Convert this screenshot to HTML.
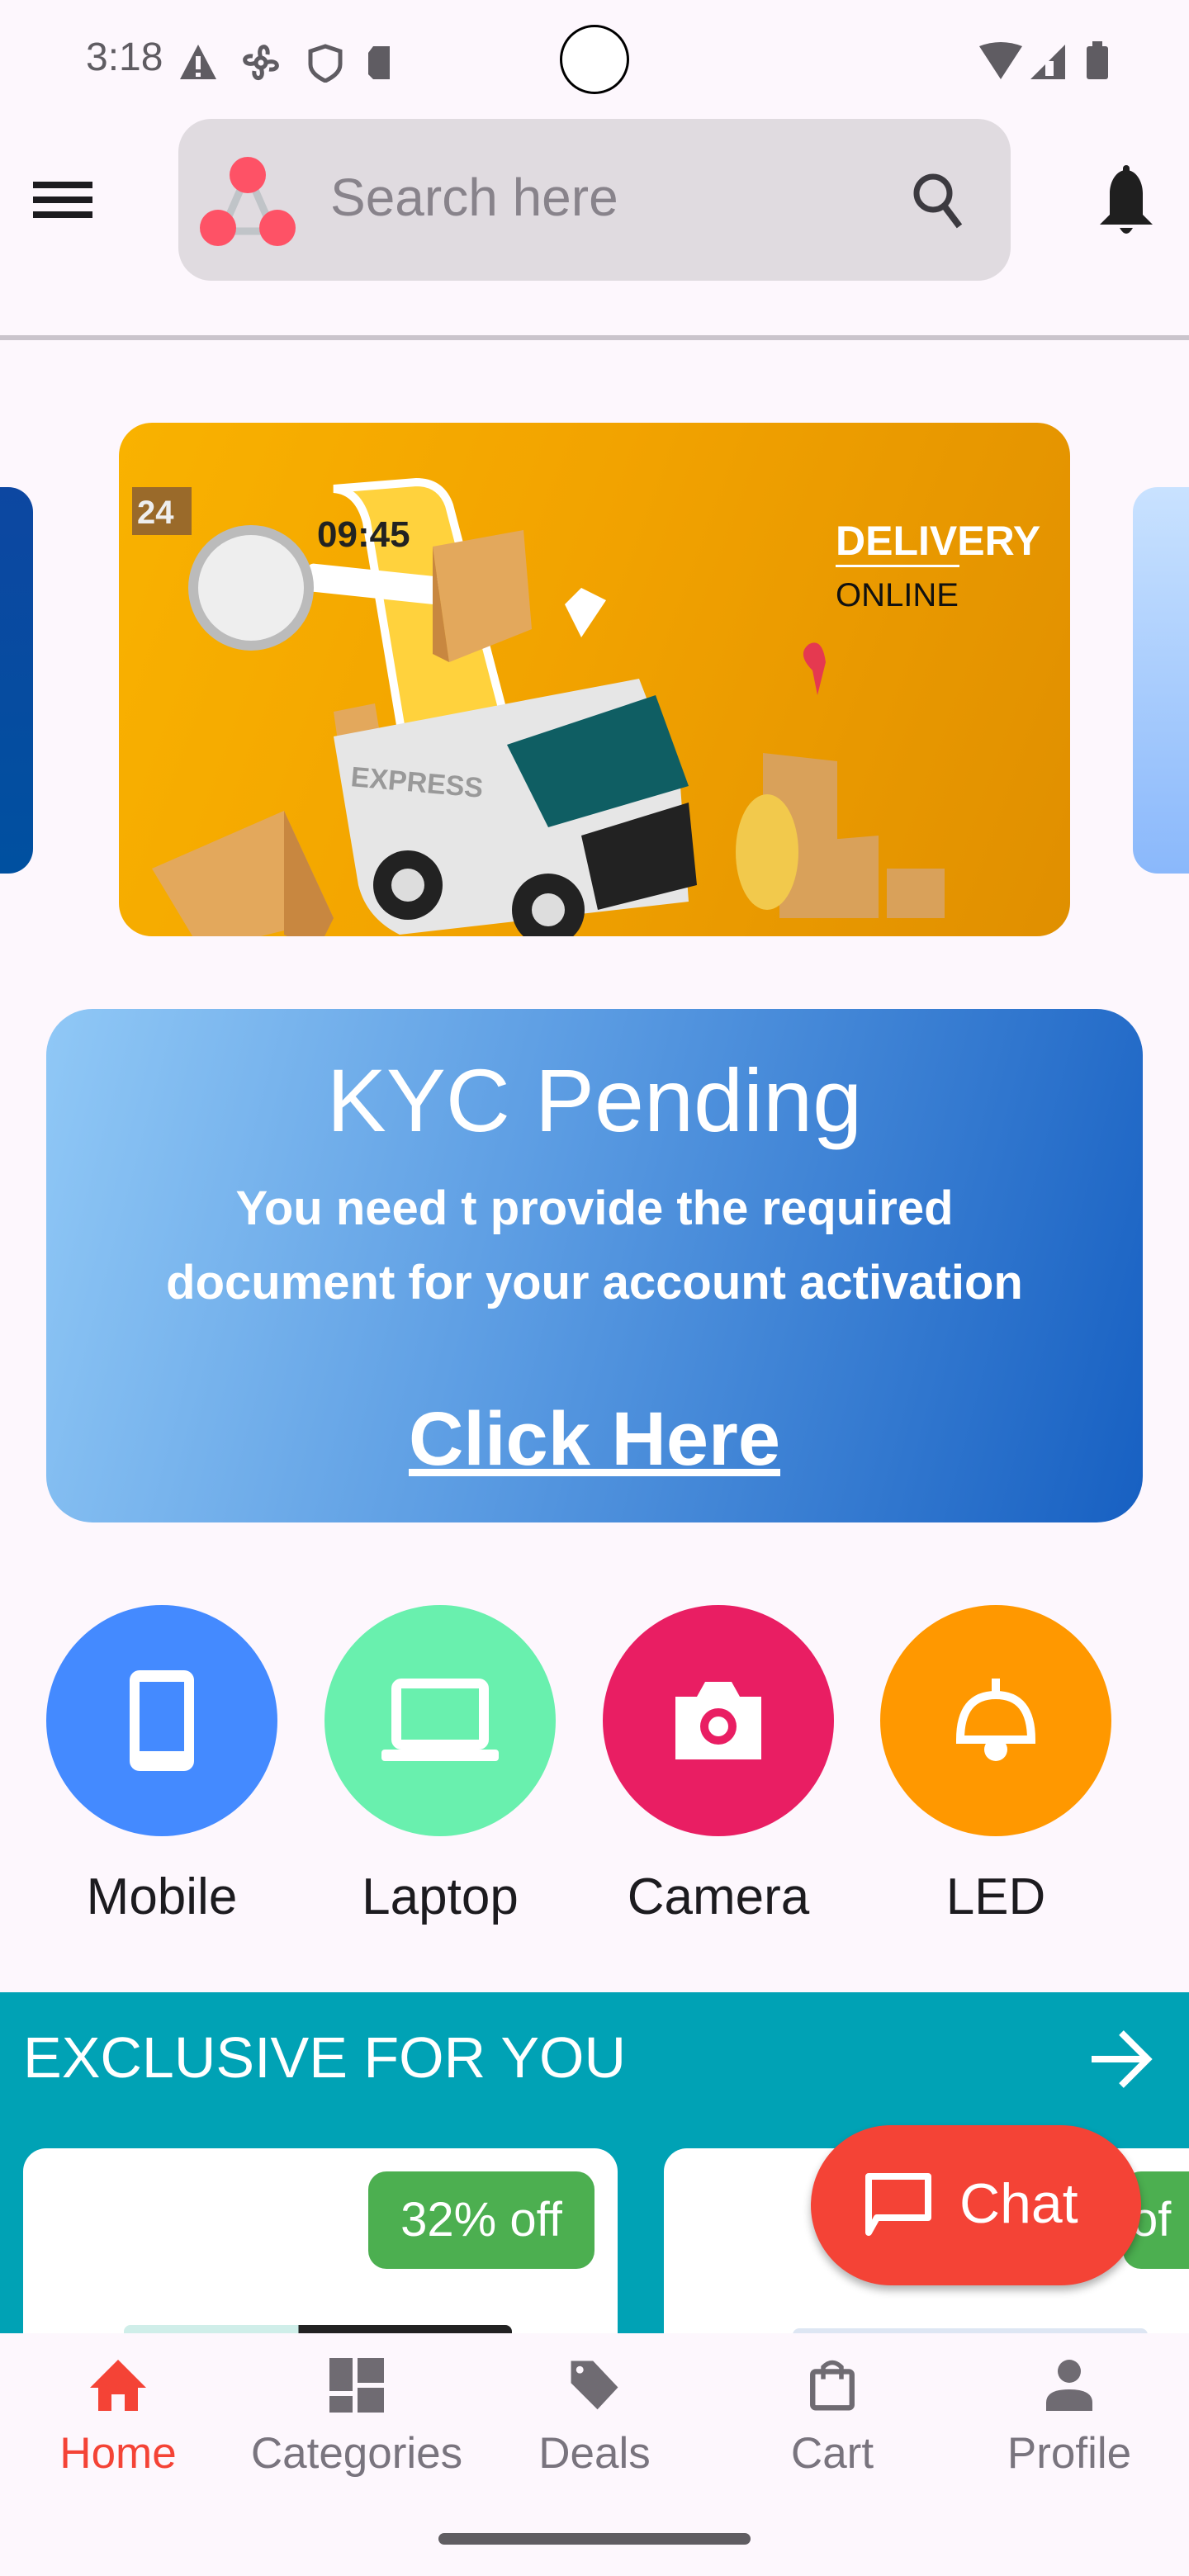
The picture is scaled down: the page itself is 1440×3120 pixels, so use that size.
<!DOCTYPE html>
<html><head><meta charset="utf-8">
<style>
*{margin:0;padding:0;box-sizing:border-box}
body{width:1440px;height:3120px;background:#fdf7fd;font-family:"Liberation Sans",sans-serif;position:relative;overflow:hidden}
.abs{position:absolute}
.cat{position:absolute;top:1944px;width:280px;height:280px;border-radius:50%;display:flex;align-items:center;justify-content:center}
.catl{position:absolute;top:2262px;width:320px;text-align:center;font-size:62px;color:#1c1b1f}
.nav{position:absolute;top:2856px;width:260px;text-align:center}
.nav .l{font-size:53px;color:#79747e;margin-top:16px}
</style></head><body>
<!-- status bar -->
<div class="abs" style="left:104px;top:42px;font-size:48px;color:#5f5c62">3:18</div>
<svg class="abs" style="left:216px;top:50px" width="280" height="50" viewBox="0 0 280 50">
<path d="M2 46 L24 4 L46 46Z" fill="#5f5c62"/><rect x="21" y="18" width="6" height="16" fill="#fdf7fd"/><rect x="21" y="38" width="6" height="5" fill="#fdf7fd"/>
<g fill="none" stroke="#5f5c62" stroke-width="5"><circle cx="100" cy="26" r="6"/><path d="M100 20 C94 4 110 2 108 16 M106 26 C122 20 124 36 110 34 M100 32 C106 48 90 48 92 36 M94 26 C78 32 76 16 90 18"/>
<path d="M178 6 L196 12 L196 28 C196 38 186 44 178 48 C170 44 160 38 160 28 L160 12Z"/></g>
<path d="M236 6 L256 6 L256 46 L236 46 L230 40 L230 14Z" fill="#5f5c62"/>
</svg>
<div class="abs" style="left:678px;top:30px;width:84px;height:84px;border-radius:50%;border:3px solid #000;background:#fff"></div>
<svg class="abs" style="left:1186px;top:50px" width="160" height="48" viewBox="0 0 160 48">
<path d="M0 6 Q26 -4 52 6 L26 46Z" fill="#5f5c62"/><path d="M62 46 L104 4 L104 46Z" fill="#5f5c62"/><rect x="80" y="24" width="10" height="18" fill="#fdf7fd"/>
<rect x="130" y="6" width="26" height="40" rx="3" fill="#5f5c62"/><rect x="137" y="0" width="12" height="8" fill="#5f5c62"/>
</svg>
<!-- header -->
<div class="abs" style="left:40px;top:220px;width:72px;height:8px;background:#1c1b1f"></div>
<div class="abs" style="left:40px;top:238px;width:72px;height:8px;background:#1c1b1f"></div>
<div class="abs" style="left:40px;top:256px;width:72px;height:8px;background:#1c1b1f"></div>
<div class="abs" style="left:216px;top:144px;width:1008px;height:196px;border-radius:40px;background:#e0dbe0"></div>
<svg class="abs" style="left:240px;top:186px" width="120" height="116" viewBox="0 0 120 116">
<g stroke="#c0c4c8" stroke-width="9"><line x1="58" y1="28" x2="30" y2="92"/><line x1="62" y1="28" x2="90" y2="92"/><line x1="30" y1="94" x2="90" y2="94"/></g>
<circle cx="60" cy="26" r="22" fill="#fe5266"/><circle cx="24" cy="90" r="22" fill="#fe5266"/><circle cx="96" cy="90" r="22" fill="#fe5266"/>
</svg>
<div class="abs" style="left:400px;top:202px;font-size:64px;color:#88838b">Search here</div>
<svg class="abs" style="left:1104px;top:206px" width="64" height="72" viewBox="0 0 64 72"><circle cx="26" cy="28" r="20" fill="none" stroke="#3c3a40" stroke-width="7"/><line x1="40" y1="44" x2="58" y2="68" stroke="#3c3a40" stroke-width="8"/></svg>
<svg class="abs" style="left:1326px;top:200px" width="76" height="88" viewBox="0 0 76 88"><path d="M38 6 C50 6 58 20 58 34 L58 60 L70 72 L6 72 L18 60 L18 34 C18 20 26 6 38 6Z" fill="#1f1f1f"/><rect x="34" y="0" width="8" height="12" rx="4" fill="#1f1f1f"/><path d="M30 76 Q38 90 46 76Z" fill="#1f1f1f"/></svg>
<div class="abs" style="left:0;top:406px;width:1440px;height:6px;background:#cac4cc"></div>
<!-- carousel -->
<div class="abs" style="left:-40px;top:590px;width:80px;height:468px;border-radius:30px;background:linear-gradient(#0d47a1,#0050a0)"></div>
<div class="abs" style="left:1372px;top:590px;width:120px;height:468px;border-radius:30px;background:linear-gradient(#c9e2ff,#8ab8fb)"></div>
<div class="abs" style="left:144px;top:512px;width:1152px;height:622px;border-radius:40px;overflow:hidden;background:linear-gradient(110deg,#f9b200 0%,#f2a300 45%,#e08f00 100%)">
<svg width="1152" height="622" viewBox="0 0 1152 622">
<path d="M260 80 L360 72 Q390 72 400 100 L520 560 Q524 590 500 592 L380 600 L300 120 Q290 82 260 80Z" fill="#ffd23d" stroke="#fff" stroke-width="10"/>
<text x="240" y="150" font-family="Liberation Sans" font-weight="bold" font-size="44" fill="#222">09:45</text>
<rect x="230" y="170" width="160" height="34" rx="6" fill="#fff" transform="rotate(6 230 170)"/>
<circle cx="160" cy="200" r="70" fill="#eee" stroke="#bbb" stroke-width="12"/>
<rect x="16" y="78" width="72" height="58" fill="#9a6a2a"/><text x="22" y="122" font-family="Liberation Sans" font-weight="bold" font-size="40" fill="#eee">24</text>
<path d="M380 150 L490 130 L500 250 L400 290Z" fill="#e3a85c"/><path d="M380 150 L400 290 L380 280Z" fill="#c88740"/>
<path d="M540 220 L560 200 L590 215 L560 260Z" fill="#fff"/>
<path d="M260 350 L310 340 L320 400 L270 420Z" fill="#e3a85c"/>
<path d="M260 380 L630 310 L680 440 L690 580 L340 620 Q300 600 290 560Z" fill="#e6e6e6"/>
<path d="M470 390 L650 330 L690 440 L520 490Z" fill="#0f5e63"/>
<path d="M560 500 L690 460 L700 560 L580 590Z" fill="#222"/>
<circle cx="350" cy="560" r="42" fill="#222"/><circle cx="350" cy="560" r="20" fill="#ddd"/>
<circle cx="520" cy="590" r="44" fill="#222"/><circle cx="520" cy="590" r="20" fill="#ddd"/>
<text x="280" y="440" font-family="Liberation Sans" font-weight="bold" font-size="34" fill="#999" transform="rotate(5 280 440)">EXPRESS</text>
<path d="M40 540 L200 470 L260 600 L100 640Z" fill="#e3a85c"/><path d="M200 470 L260 600 L240 640 L200 620Z" fill="#c88740"/>
<path d="M780 400 L870 410 L870 520 L780 500Z" fill="#d9a15a"/><path d="M800 510 L920 500 L920 600 L800 600Z" fill="#d9a15a"/><path d="M930 540 L1000 540 L1000 600 L930 600Z" fill="#d9a15a"/>
<ellipse cx="785" cy="520" rx="38" ry="70" fill="#f2c94c"/>
<path d="M840 300 Q820 280 836 268 Q852 260 856 290 L846 330Z" fill="#e53950"/>
<text x="868" y="160" font-family="Liberation Sans" font-weight="bold" font-size="50" fill="#fff">DELIVERY</text>
<rect x="868" y="172" width="150" height="3" fill="#fff"/>
<text x="868" y="222" font-family="Liberation Sans" font-size="40" fill="#111">ONLINE</text>
</svg></div>
<!-- KYC -->
<div class="abs" style="left:56px;top:1222px;width:1328px;height:622px;border-radius:56px;background:linear-gradient(105deg,#90c8f6 0%,#5a9be2 45%,#1760c2 100%);color:#fff;text-align:center">
<div style="font-size:108px;margin-top:52px;line-height:1.1">KYC Pending</div>
<div style="font-size:58px;font-weight:bold;line-height:90px;margin-top:26px">You need t provide the required<br>document for your account activation</div>
<div style="font-size:92px;font-weight:bold;text-decoration:underline;margin-top:98px;line-height:1">Click Here</div>
</div>
<!-- categories -->
<div class="cat" style="left:56px;background:#448aff"><svg width="90" height="134" viewBox="0 0 90 134"><rect x="6" y="6" width="78" height="122" rx="12" fill="#fff"/><rect x="18" y="20" width="54" height="84" fill="#448aff"/></svg></div>
<div class="cat" style="left:393px;background:#69f0ae"><svg width="150" height="110" viewBox="0 0 150 110"><rect x="22" y="10" width="106" height="74" rx="6" fill="none" stroke="#fff" stroke-width="12"/><rect x="4" y="90" width="142" height="14" rx="4" fill="#fff"/></svg></div>
<div class="cat" style="left:730px;background:#e91e63"><svg width="120" height="106" viewBox="0 0 120 106"><path d="M8 24 L34 24 L44 6 L76 6 L86 24 L112 24 L112 100 L8 100Z" fill="#fff"/><circle cx="60" cy="60" r="22" fill="#e91e63"/><circle cx="60" cy="60" r="12" fill="#fff"/></svg></div>
<div class="cat" style="left:1066px;background:#ff9800"><svg width="110" height="110" viewBox="0 0 110 110"><rect x="50" y="4" width="10" height="20" fill="#fff"/><path d="M12 78 Q12 24 55 24 Q98 24 98 78Z" fill="none" stroke="#fff" stroke-width="10"/><circle cx="55" cy="90" r="14" fill="#fff"/></svg></div>
<div class="catl" style="left:36px">Mobile</div>
<div class="catl" style="left:373px">Laptop</div>
<div class="catl" style="left:710px">Camera</div>
<div class="catl" style="left:1046px">LED</div>
<!-- exclusive -->
<div class="abs" style="left:0;top:2413px;width:1440px;height:420px;background:#00a2b5"></div>
<div class="abs" style="left:28px;top:2452px;font-size:70px;color:#fff">EXCLUSIVE FOR YOU</div>
<svg class="abs" style="left:1318px;top:2456px" width="80" height="76" viewBox="0 0 80 76"><path d="M4 38 L70 38 M40 6 L72 38 L40 70" fill="none" stroke="#fff" stroke-width="8"/></svg>
<div class="abs" style="left:28px;top:2602px;width:720px;height:260px;border-radius:28px;background:#fff"></div>
<div class="abs" style="left:804px;top:2602px;width:700px;height:260px;border-radius:28px;background:#fff"></div>
<div class="abs" style="left:446px;top:2630px;width:274px;height:118px;border-radius:22px;background:#4caf50;color:#fff;font-size:58px;text-align:center;line-height:118px">32% off</div>
<div class="abs" style="left:1360px;top:2630px;width:120px;height:118px;border-radius:22px;background:#4caf50;color:#fff;font-size:58px;line-height:118px;padding-left:10px">of</div>
<div class="abs" style="left:150px;top:2816px;width:470px;height:14px;border-radius:8px 8px 0 0;background:linear-gradient(90deg,#cfeee9 45%,#222 45%)"></div>
<div class="abs" style="left:960px;top:2820px;width:430px;height:10px;border-radius:8px 8px 0 0;background:#dde6f3"></div>
<div class="abs" style="left:982px;top:2574px;width:400px;height:194px;border-radius:97px;background:#f44336;box-shadow:0 6px 10px rgba(0,0,0,.3)">
<svg class="abs" style="left:64px;top:56px" width="84" height="80" viewBox="0 0 84 80"><path d="M6 6 L78 6 L78 56 L16 56 L6 74Z" fill="none" stroke="#fff" stroke-width="8" stroke-linejoin="round"/></svg>
<div class="abs" style="left:180px;top:56px;font-size:68px;color:#fff">Chat</div>
</div>
<!-- bottom nav -->
<div class="abs" style="left:0;top:2826px;width:1440px;height:294px;background:#fdf7fd"></div>
<div class="nav" style="left:13px"><svg width="72" height="64" viewBox="0 0 72 64"><path d="M36 2 L70 36 L60 36 L60 64 L44 64 L44 44 L28 44 L28 64 L12 64 L12 36 L2 36Z" fill="#f44336"/></svg><div class="l" style="color:#f44336">Home</div></div>
<div class="nav" style="left:302px"><svg width="66" height="66" viewBox="0 0 66 66"><rect x="0" y="0" width="28" height="40" fill="#6f6b72"/><rect x="34" y="0" width="32" height="30" fill="#6f6b72"/><rect x="0" y="46" width="28" height="20" fill="#6f6b72"/><rect x="34" y="36" width="32" height="30" fill="#6f6b72"/></svg><div class="l" style="margin-top:14px">Categories</div></div>
<div class="nav" style="left:590px"><svg width="72" height="64" viewBox="0 0 72 72"><path d="M4 4 L34 4 L68 40 L40 70 L4 34Z" fill="#6f6b72"/><circle cx="16" cy="16" r="5" fill="#fdf7fd"/></svg><div class="l">Deals</div></div>
<div class="nav" style="left:878px"><svg width="60" height="64" viewBox="0 0 60 70"><rect x="4" y="18" width="52" height="48" rx="4" fill="none" stroke="#6f6b72" stroke-width="7"/><path d="M18 28 L18 12 Q30 0 42 12 L42 28" fill="none" stroke="#6f6b72" stroke-width="6"/></svg><div class="l">Cart</div></div>
<div class="nav" style="left:1165px"><svg width="60" height="64" viewBox="0 0 60 64"><circle cx="30" cy="16" r="14" fill="#6f6b72"/><path d="M2 64 L2 54 Q2 38 30 38 Q58 38 58 54 L58 64Z" fill="#6f6b72"/></svg><div class="l">Profile</div></div>
<div class="abs" style="left:531px;top:3068px;width:378px;height:14px;border-radius:7px;background:#605d62"></div>
</body></html>
